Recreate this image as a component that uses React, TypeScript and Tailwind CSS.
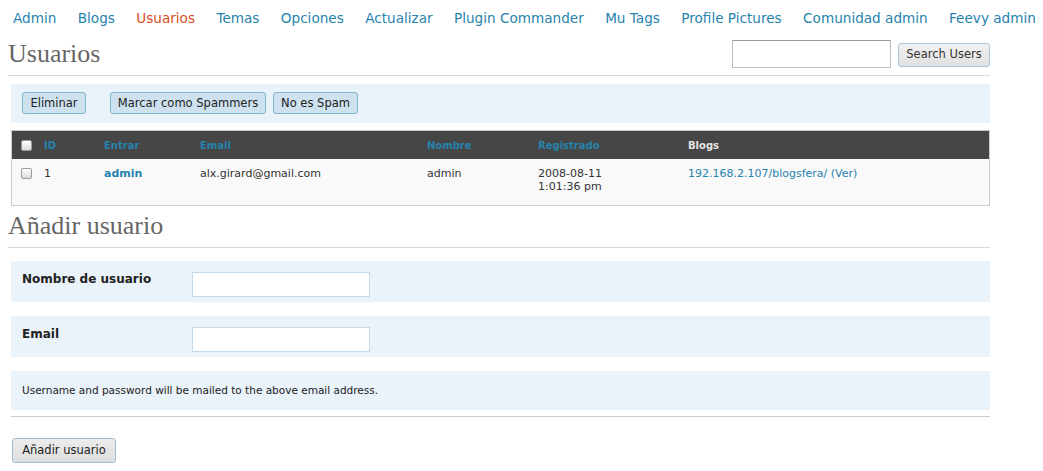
const navItems = [
  'Admin',
  'Blogs',
  'Usuarios',
  'Temas',
  'Opciones',
  'Actualizar',
  'Plugin Commander',
  'Mu Tags',
  'Profile Pictures',
  'Comunidad admin',
  'Feevy admin',
]

const sans = { fontFamily: '"DejaVu Sans", "Lucida Grande", Verdana, sans-serif' }
const serif = { fontFamily: '"Liberation Serif", Georgia, serif' }

function Checkbox() {
  return (
    <span className="block w-[11px] h-[11px] rounded-[2px] border border-[#9a9a9a] bg-gradient-to-b from-[#ffffff] to-[#dcdcdc]" />
  )
}

const cols = 'grid grid-cols-[23px_60px_96px_227px_111px_150px_1fr] pl-[9px]'

export default function App() {
  return (
    <div className="w-[1043px] h-[471px] bg-white text-[#333] overflow-hidden" style={sans}>
      {/* Top menu */}
      <nav className="h-[36px] pt-[9px] pl-[13px] flex gap-[21.4px] text-[13.6px] leading-[18px]">
        {navItems.map((item) => (
          <a key={item} className={item === 'Usuarios' ? 'text-[#d54e21]' : 'text-[#2583ad]'}>
            {item}
          </a>
        ))}
      </nav>

      <div className="ml-[8px] w-[982px]">
        {/* Title + search */}
        <div className="h-[40px] border-b border-[#dadada] flex items-start">
          <h2 className="mt-[3px] text-[26px] leading-[30px] text-[#666]" style={serif}>
            Usuarios
          </h2>
          <div className="ml-auto flex items-start">
            <input className="mt-[4px] w-[159px] h-[28px] border border-[#bdbdbd] border-t-[#999] bg-white" />
            <button className="mt-[7px] ml-[7px] w-[92px] h-[24px] rounded-[3px] border border-[#a9c4d8] bg-gradient-to-b from-[#f2f2f2] to-[#e0e0e0] text-[11.5px] text-[#333]">
              Search Users
            </button>
          </div>
        </div>

        <div className="ml-[3px]">
          {/* Bulk actions */}
          <div className="mt-[8px] h-[39px] bg-[#eaf2fa] pl-[11px] pt-[8px] flex items-start text-[11.5px]">
            <button className="w-[64px] h-[22px] pt-[1px] rounded-[3px] border border-[#80b5d0] bg-[#cee1ef] text-[#222]">
              Eliminar
            </button>
            <button className="ml-[24px] w-[156px] h-[22px] pt-[1px] rounded-[3px] border border-[#80b5d0] bg-[#cee1ef] text-[#222]">
              Marcar como Spammers
            </button>
            <button className="ml-[7px] w-[85px] h-[22px] pt-[1px] rounded-[3px] border border-[#80b5d0] bg-[#cee1ef] text-[#222]">
              No es Spam
            </button>
          </div>

          {/* Users table */}
          <div className="mt-[7px] border border-[#cccccc]">
            <div className={`${cols} h-[28px] bg-[#464646] items-center text-[10px] font-bold`}>
              <Checkbox />
              <span className="text-[#2583ad]">ID</span>
              <span className="text-[#2583ad]">Entrar</span>
              <span className="text-[#2583ad]">Email</span>
              <span className="text-[#2583ad]">Nombre</span>
              <span className="text-[#2583ad]">Registrado</span>
              <span className="text-[#e4e4e4]">Blogs</span>
            </div>
            <div className={`${cols} h-[46px] bg-[#f9f9f9] pt-[8px] text-[11px] leading-[13px]`}>
              <span className="pt-[1px]">
                <Checkbox />
              </span>
              <span>1</span>
              <span className="font-bold text-[#2583ad]">admin</span>
              <span>alx.girard@gmail.com</span>
              <span>admin</span>
              <span>
                2008-08-11
                <br />
                1:01:36 pm
              </span>
              <span className="text-[#2583ad]">
                192.168.2.107/blogsfera/ <span>(Ver)</span>
              </span>
            </div>
          </div>
        </div>

        {/* Add user */}
        <div className="h-[42px] pt-[5px] border-b border-[#dadada]">
          <h2 className="text-[26px] leading-[30px] text-[#666]" style={serif}>
            Añadir usuario
          </h2>
        </div>

        <div className="ml-[3px]">
          <div className="mt-[13px] h-[41px] bg-[#eaf2fa] pl-[11px] pt-[10px] flex items-start">
            <label className="w-[170px] text-[12px] leading-[16px] font-bold text-[#222]">Nombre de usuario</label>
            <input className="mt-[1px] w-[178px] h-[25px] border border-[#c6d9e9] bg-white" />
          </div>
          <div className="mt-[14px] h-[41px] bg-[#eaf2fa] pl-[11px] pt-[10px] flex items-start">
            <label className="w-[170px] text-[12px] leading-[16px] font-bold text-[#222]">Email</label>
            <input className="mt-[1px] w-[178px] h-[25px] border border-[#c6d9e9] bg-white" />
          </div>
          <div className="mt-[14px] h-[39px] bg-[#eaf2fa] pl-[11px] flex items-center text-[10.5px] text-[#222]">
            Username and password will be mailed to the above email address.
          </div>
          <div className="mt-[6px] border-t border-[#cccccc]" />

          <button className="mt-[21px] ml-[1px] w-[104px] h-[25px] rounded-[3px] border border-[#9fbdd3] bg-gradient-to-b from-[#ececec] to-[#dedede] text-[11.5px] text-[#222]">
            Añadir usuario
          </button>
        </div>
      </div>
    </div>
  )
}
